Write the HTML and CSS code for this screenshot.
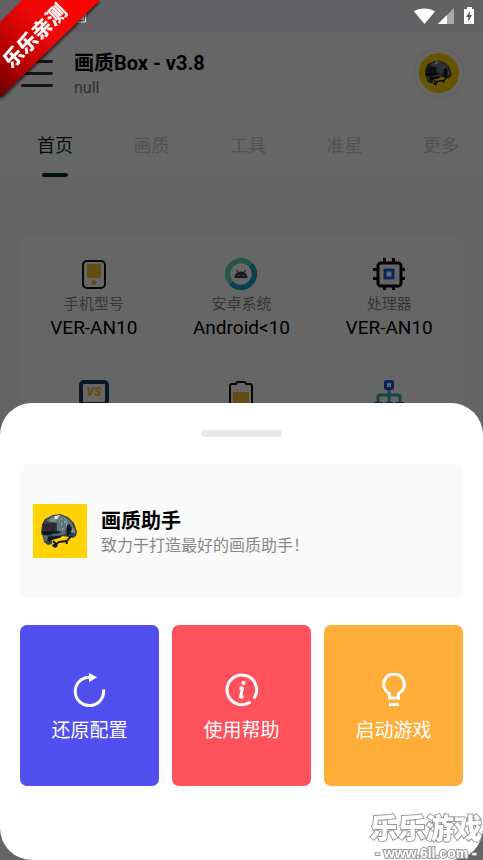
FILE: index.html
```html
<!DOCTYPE html>
<html lang="zh-CN">
<head>
<meta charset="utf-8">
<meta name="viewport" content="width=device-width, initial-scale=1">
<title>画质Box</title>
<link rel="stylesheet" href="styles.css">
</head>
<body>
<svg class="defs" aria-hidden="true">
  <symbol id="helmet" viewBox="0 0 54 54">
    <path fill="#ffd200" d="M0 0h54v54H0z"/>
    <path fill="#33434b" d="M8 29l1-9 3-5 8-4 7-1 8 3 6 6 3 9-1 4-3 2-5-1-5-1-4 2-7 2 0 4-4 1-4-3-1-5z"/>
    <path fill="#61747d" d="M13 17l7-5 7-1 7 3 5 5 1 5-3-2-4 2-1 6-5 1-3-3 0-9z"/>
    <path fill="#7d8c92" d="M17 15l6-2 3 0-2 4-7 1zM31 14l3 2 1 4-3-1zM39 22l3 4 0 4-3-2z"/>
    <path fill="#e3e7e5" d="M22 12l5-1-3 4-3 0z"/>
    <path fill="#35242b" d="M10 20l13-1-1 7-12 0z"/>
    <path fill="#10171c" d="M9 27l13-.5 7 1.500-6 2-13 1zM34 21l3-1 1 4-1 6-3 2zM15 33l11-1 3 1-11 3-2 2-2-2z"/>
    <path fill="#54676f" d="M10 31l5 1-1 6-3-2zM18 30l10-1 1 2-9 1z"/>
    <path fill="#9ba8ab" d="M28 14h1v2h-1zM31 17h1v2h-1zM28 19h1v2h-1zM33 20h1v2h-1zM29 24h1v2h-1zM38 27h2v1h-2zM26 17h1v1h-1z"/>
    <path fill="none" stroke="#151b20" stroke-width="2" stroke-linejoin="round" d="M20 42l6-4 8-1 4-5M20 37l3 3M33 36l1 4"/>
    <path fill="#151b20" d="M19 41l4-2 2 2-2 3-3-1z"/>
  </symbol>
</svg>

<div class="app">
  <header class="top">
    <button class="menu" type="button" aria-label="菜单"><span></span><span></span><span></span></button>
    <div class="heading">
      <h1>画质Box - v3.8</h1>
      <p>null</p>
    </div>
    <span class="avatar"><svg aria-hidden="true"><use href="#helmet"/></svg></span>
  </header>
  <nav class="tabs">
    <a class="tab active" href="#home">首页</a>
    <a class="tab" href="#quality">画质</a>
    <a class="tab" href="#tools">工具</a>
    <a class="tab" href="#sight">准星</a>
    <a class="tab" href="#more">更多</a>
  </nav>
  <section class="device">
    <div class="cell">
      <svg class="cell-icon" viewBox="0 0 32 32" aria-hidden="true"><rect x="5" y="3" width="22" height="27" rx="4" fill="none" stroke="#111" stroke-width="2"/><rect x="9" y="6" width="14" height="14" rx="1" fill="#fbc02d"/><circle cx="16" cy="24.500" r="2.500" fill="#fbc02d"/></svg>
      <span class="label">手机型号</span><span class="value">VER-AN10</span>
    </div>
    <div class="cell">
      <svg class="cell-icon" viewBox="0 0 32 32" aria-hidden="true"><circle cx="16" cy="16" r="13.300" fill="none" stroke="#60d8ac" stroke-width="5.400"/><path d="M26 7A13.300 13.300 0 0 1 6 25" fill="none" stroke="#229bc5" stroke-width="5.400"/><circle cx="16" cy="16" r="10.600" fill="#fff"/><path fill="#37474f" d="M9.500 20a6.500 6.500 0 0 1 3-5.500l-1.500-2.500 1-.5 1.500 2.500a7 7 0 0 1 5 0l1.500-2.500 1 .5-1.500 2.500a6.500 6.500 0 0 1 3 5.500z"/><path fill="#fff" d="M13 17h1v1h-1zM18 17h1v1h-1z"/></svg>
      <span class="label">安卓系统</span><span class="value">Android&lt;10</span>
    </div>
    <div class="cell">
      <svg class="cell-icon" viewBox="0 0 32 32" aria-hidden="true"><rect x="5" y="5" width="23" height="23" rx="3" fill="none" stroke="#000" stroke-width="3"/><path d="M11.500 0v5M20.500 0v5M11.500 28v4M20.500 28v4M0 11.500h5M0 20.500h5M28 11.500h4M28 20.500h4" stroke="#000" stroke-width="3"/><rect x="12" y="12" width="8" height="8" fill="none" stroke="#1068e8" stroke-width="3"/></svg>
      <span class="label">处理器</span><span class="value">VER-AN10</span>
    </div>
    <div class="cell">
      <svg class="cell-icon" viewBox="0 0 32 32" aria-hidden="true"><rect x="3" y="2" width="26" height="22" rx="3" fill="none" stroke="#1c3a58" stroke-width="4"/><text x="16" y="16" text-anchor="middle" class="vs">VS</text></svg>
      <span class="label">分辨率</span>
    </div>
    <div class="cell">
      <svg class="cell-icon" viewBox="0 0 32 32" aria-hidden="true"><path d="M5 31V6q0-2 2-2h4l1-2h8l1 2h4q2 0 2 2v25z" fill="none" stroke="#111" stroke-width="2"/><path fill="#fbc02d" d="M8 12h16v18H8z"/></svg>
      <span class="label">电池</span>
    </div>
    <div class="cell">
      <svg class="cell-icon" viewBox="0 0 32 32" aria-hidden="true"><path d="M16 9v14M5 23v-6q0-2 2-2h18q2 0 2 2v6" fill="none" stroke="#2fb0ac" stroke-width="3"/><rect x="12.500" y="1.500" width="7" height="7" rx="1" fill="none" stroke="#1450e8" stroke-width="3"/><path fill="#1450e8" d="M1 22h9v8H1zM12 22h8v8h-8zM22 22h9v8h-9z"/></svg>
      <span class="label">网络</span>
    </div>
  </section>
</div>

<div class="scrim"></div>

<div class="status" aria-hidden="true">
  <svg class="status-note" viewBox="0 0 12 14"><path fill="none" stroke="#eee" stroke-width="1" d="M0 12h10.500V3"/><path fill="#ddd" d="M3 4h6v6H3z"/></svg>
  <svg class="status-icons" viewBox="0 0 62 20"><path fill="#fff" d="M0 6.500C4 2.500 16 2.500 21 6.500L10.500 19z"/><path fill="#aaa" d="M40 3v16H24z"/><path fill="#fff" d="M33 10v9h-9z"/><path fill="#fff" d="M50 4h3V2h5v2h2v15H50z"/><path fill="#555" d="M56 6l-4 6h2.500l-.5 5 4-7h-2.500z"/></svg>
</div>

<main class="sheet">
  <div class="handle"></div>
  <section class="about">
    <svg class="logo" aria-hidden="true"><use href="#helmet"/></svg>
    <div>
      <h2>画质助手</h2>
      <p>致力于打造最好的画质助手！</p>
    </div>
  </section>
  <div class="actions">
    <button class="action restore" type="button">
      <svg viewBox="0 0 34 34" aria-hidden="true"><path d="M30.500 16.500A14.200 14.200 0 1 1 16.500 4.200" fill="none" stroke="#fff" stroke-width="3"/><path fill="#fff" d="M16 0l8 4.200-8 5z"/></svg>
      还原配置
    </button>
    <button class="action help" type="button">
      <svg viewBox="0 0 34 34" aria-hidden="true"><path d="M24.500 29.500A14.800 14.800 0 1 1 29.500 24.500" fill="none" stroke="#fff" stroke-width="3" stroke-linecap="round"/><circle cx="18.500" cy="10" r="2" fill="#fff"/><path d="M14.500 15h3l-2 9h3" fill="none" stroke="#fff" stroke-width="3" stroke-linejoin="round"/></svg>
      使用帮助
    </button>
    <button class="action launch" type="button">
      <svg viewBox="0 0 34 34" aria-hidden="true"><path d="M12.500 25v-4.500A10.300 10.300 0 1 1 21.500 20.500V25z" fill="none" stroke="#fff" stroke-width="3"/><path fill="#fff" d="M12 30h10v3H12z"/></svg>
      启动游戏
    </button>
  </div>
</main>

<svg class="ribbon" viewBox="0 0 104 104" role="img" aria-label="乐乐亲测">
  <defs><linearGradient id="red" x1="1" y1="0" x2="0" y2="1"><stop offset="0" stop-color="#f00"/><stop offset=".4" stop-color="#f00808"/><stop offset=".75" stop-color="#b30000"/><stop offset="1" stop-color="#650000"/></linearGradient></defs>
  <path class="ribbon-band" fill="url(#red)" d="M22 0h78L0 98V22z"/>
  <text class="ribbon-text" transform="translate(40 41) rotate(-45)" text-anchor="middle">乐乐亲测</text>
</svg>

<div class="watermark"><strong>乐乐游戏</strong><span>- www.6ll.com -</span></div>
</body>
</html>
```
FILE: styles.css
```css
* { box-sizing: border-box; }
body {
  margin: 0;
  background: #fff;
  color: #000;
  font-family: Roboto, "Noto Sans CJK SC", sans-serif;
}
h1, h2, p { margin: 0; }
button { border: 0; padding: 0; font: inherit; cursor: pointer; }
a { color: inherit; text-decoration: none; }
.defs { position: absolute; width: 0; height: 0; }

.app {
  height: 100vh;
  overflow: hidden;
  background: #fbfbfb;
  border-top: 32px solid #f5f5fa;
}
.top {
  display: flex;
  align-items: center;
  height: 82px;
  padding: 0 20px 0 21px;
  background: #fff;
}
.menu {
  display: flex;
  flex-direction: column;
  gap: 9px;
  width: 32px;
  margin-right: 21px;
  background: none;
}
.menu span { height: 3px; border-radius: 2px; background: #333; }
.heading { flex: 1; padding-top: 3px; }
h1 { font-size: 20px; line-height: 26px; font-weight: 700; }
.heading p { font-size: 16px; line-height: 24px; color: #777; }
.avatar {
  width: 48px;
  height: 48px;
  border: 4px solid #fff;
  border-radius: 50%;
  overflow: hidden;
  box-shadow: 0 0 3px #ccc;
}
.avatar svg { display: block; width: 100%; height: 100%; }

.tabs {
  display: flex;
  justify-content: space-between;
  height: 63px;
  padding: 19px 24px 0 37px;
  background: #fff;
  font-size: 18px;
  line-height: 26px;
  color: #ccc;
}
.tab.active { color: #062a30; }
.tab.active::after {
  content: "";
  display: block;
  width: 26px;
  height: 4px;
  margin: 14px auto 0;
  border-radius: 2px;
  background: currentColor;
}

.device {
  display: grid;
  grid-template-columns: repeat(3, 1fr);
  row-gap: 40px;
  margin: 59px 20px 0;
  padding: 22px 0;
  border-radius: 8px;
  background: #fff;
}
.cell { display: flex; flex-direction: column; align-items: center; min-height: 82px; }
.cell-icon { width: 32px; height: 32px; }
.label { margin-top: 3px; font-size: 15px; line-height: 23px; color: #888; }
.value { font-size: 19px; line-height: 24px; }
.vs { font: italic 900 12px Roboto, sans-serif; fill: #fbc02d; }

.scrim { position: fixed; inset: 0; background: rgba(0, 0, 0, .6); }

.status {
  position: fixed;
  top: 0;
  left: 0;
  right: 0;
  display: flex;
  justify-content: space-between;
  padding: 5px 7px 0 75px;
}
.status-note { width: 12px; height: 14px; margin-top: 5px; }
.status-icons { width: 62px; height: 20px; }

.sheet {
  position: fixed;
  left: 0;
  right: 0;
  bottom: 0;
  padding: 27px 20px 74px;
  border-radius: 32px;
  background: #fff;
}
.handle { width: 81px; height: 7px; margin: 0 auto 27px; border-radius: 4px; background: #e9e9e9; }
.about {
  display: flex;
  align-items: center;
  gap: 14px;
  padding: 40px 13px;
  border-radius: 7px;
  background: #fafafa;
}
.about > div { padding-top: 4px; }
.logo { width: 54px; height: 54px; }
h2 { font-size: 20px; line-height: 26px; font-weight: 700; }
.about p { font-size: 16px; line-height: 24px; color: #888; }
.actions {
  display: grid;
  grid-template-columns: repeat(3, 1fr);
  gap: 13px;
  margin-top: 27px;
}
.action {
  display: flex;
  flex-direction: column;
  align-items: center;
  gap: 10px;
  padding: 48px 0 41px;
  border-radius: 7px;
  color: #fff;
  font-size: 19px;
  line-height: 28px;
}
.action svg { width: 34px; height: 34px; }
.restore { background: #504ff0; }
.help { background: #ff525c; }
.launch { background: #ffae39; }

.ribbon { position: fixed; top: 0; left: 0; width: 104px; height: 104px; }
.ribbon-band { filter: drop-shadow(1px 2px 1px rgba(0, 0, 0, .6)); }
.ribbon-text { font: 900 20px "Noto Sans CJK SC", sans-serif; fill: #fff; }

.watermark {
  position: fixed;
  right: 1px;
  bottom: 0;
  display: flex;
  flex-direction: column;
  align-items: center;
  color: #fff;
  -webkit-text-stroke: 2px #999;
  paint-order: stroke fill;
}
.watermark strong { font-size: 28px; line-height: 32px; font-weight: 900; }
.watermark span { font: 700 14px/14px "Liberation Sans", sans-serif; }
```
